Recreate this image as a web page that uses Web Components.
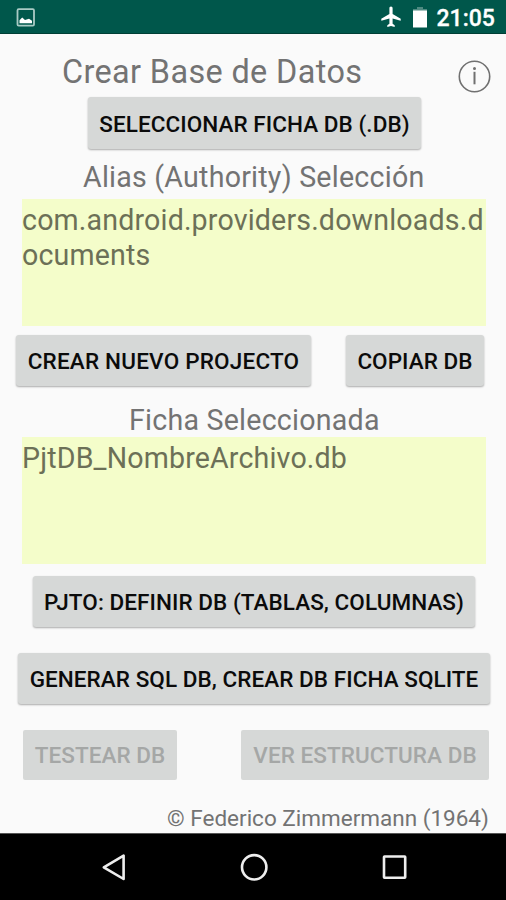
<!DOCTYPE html>
<html lang="es">
<head>
<meta charset="utf-8">
<title>Crear Base de Datos</title>
<style>
html,body{margin:0;height:100%}
body{font-family:Roboto,"Liberation Sans",sans-serif;background:#fafafa;overflow:hidden}
</style>
</head>
<body>
<db-app></db-app>
<script>
const define = (name, html) => customElements.define(name, class extends HTMLElement {
  constructor() {
    super();
    this.attachShadow({ mode: 'open' }).innerHTML = html;
  }
});

define('status-bar', `
<style>
:host{display:flex;align-items:center;height:34px;box-sizing:border-box;padding:2px 11px 0 16px;background:linear-gradient(#00574b 0 33px,#003f35 33px);color:#fff;flex:none}
svg{display:block;flex:none}
.gap{flex:1}
.plane{margin:0 12px 2px 0}
.battery{margin:0 9px 2px 0}
span{font-size:23px;line-height:30px;height:28px;font-weight:500;letter-spacing:.05px;-webkit-text-stroke:.3px #fff}
</style>
<svg width="20" height="20" viewBox="0 0 20 20"><rect x="1.5" y="1.2" width="16.5" height="16.5" rx="1.2" fill="none" stroke="#a9cbc5" stroke-width="1.8"/><path d="M3.500 15.300V12.300L6.200 9.600L9 11.900L13 10.700L16 12.800V15.300Z" fill="#fff"/></svg>
<div class="gap"></div>
<svg class="plane" width="20" height="22" viewBox="0 0 20 22"><path d="M10 0.5C9 .5 8.4 1.3 8.4 2.3V8L0.3 12.7V14.8L8.4 12.4V17.7L6.3 19.3V20.9L10 19.9L13.7 20.9V19.3L11.6 17.7V12.4L19.7 14.8V12.7L11.6 8V2.3C11.6 1.3 11 .5 10 .5Z" fill="#fff"/></svg>
<svg class="battery" width="14" height="21" viewBox="0 0 14 21"><path d="M4 0H10V2H14V4H0V2H4Z" fill="#4f8a81"/><path d="M0 3.5H14V20.500H0Z" fill="#fff"/></svg>
<span>21:05</span>`);

define('text-label', `
<style>
:host{display:block;color:#737373;white-space:nowrap;font-size:28.6px;line-height:34px;letter-spacing:.23px}
</style><slot></slot>`);

define('info-icon', `
<style>:host{display:block;width:34px;height:34px}svg{display:block}</style>
<svg width="34" height="34" viewBox="0 0 34 34"><circle cx="16.500" cy="17.500" r="15.200" fill="none" stroke="#707070" stroke-width="1.6"/><path d="M16.500 12.800V25.300" stroke="#707070" stroke-width="2"/><circle cx="16.500" cy="9.400" r="1.500" fill="#707070"/></svg>`);

define('raised-button', `
<style>
:host{display:flex;box-sizing:border-box;flex:none}
button{all:unset;flex:1;box-sizing:border-box;height:var(--height,51px);border-radius:3px;background:#d6d8d7;color:#0b0b0b;text-align:center;white-space:nowrap;font-size:22.5px;font-weight:500;line-height:var(--line,52px);letter-spacing:var(--track,.06px);box-shadow:0 1px 2px rgba(0,0,0,.32)}
:host([disabled]) button{height:50px;line-height:51px;color:#a5a7a6;box-shadow:none;border-radius:2px}
</style>
<button><slot></slot></button>`);

define('value-field', `
<style>
:host{display:block;box-sizing:border-box;width:464px;height:127px;background:#f4fdca;color:#6c7057;font-size:28.6px;line-height:35px;padding-top:4px;word-break:break-all;letter-spacing:.16px}
</style><slot></slot>`);

define('nav-bar', `
<style>
:host{display:block;height:67px;background:#000;border-top:1px solid #555;box-sizing:border-box;flex:none}
svg{display:block}
</style>
<svg width="506" height="66" viewBox="0 0 506 66" fill="none" stroke="#eee" stroke-width="2.6" stroke-linejoin="round"><path d="M103.800 33.300L123.600 21.600V45Z"/><circle cx="254.200" cy="33.300" r="12.200"/><rect x="384" y="22.500" width="21.200" height="21.200" rx=".5"/></svg>`);

define('db-app', `
<style>
:host{display:flex;flex-direction:column;width:506px;height:900px;background:#fafafa}
main{flex:1;display:flex;flex-direction:column;box-sizing:border-box;min-height:0}
.row{display:flex;flex:none}
.title{height:63px;align-items:flex-start;padding:19px 14px 0 62px;box-sizing:border-box;justify-content:space-between}
.title text-label{font-size:32.4px;line-height:38px;letter-spacing:.38px}
.title info-icon{margin-top:6px}
</style>
<status-bar></status-bar>
<main>
  <div class="row title"><text-label>Crear Base de Datos</text-label><info-icon></info-icon></div>
  <raised-button style="margin:0 85px 0 88px;--height:52px;--line:54px">SELECCIONAR FICHA DB (.DB)</raised-button>
  <text-label style="margin:11px 0 0 83px;height:39px">Alias (Authority) Selección</text-label>
  <value-field style="margin-left:22px">com.android.providers.downloads.documents</value-field>
  <div class="row" style="margin:9px 22px 0 16px;justify-content:space-between">
    <raised-button style="width:295px;--track:.2px">CREAR NUEVO PROJECTO</raised-button>
    <raised-button style="width:138px">COPIAR DB</raised-button>
  </div>
  <text-label style="margin:17px 0 0 129px;height:34px">Ficha Seleccionada</text-label>
  <value-field style="margin-left:22px">PjtDB_NombreArchivo.db</value-field>
  <raised-button style="margin:12px 31px 0 33px">PJTO: DEFINIR DB (TABLAS, COLUMNAS)</raised-button>
  <raised-button style="margin:26px 16px 0 18px">GENERAR SQL DB, CREAR DB FICHA SQLITE</raised-button>
  <div class="row" style="margin:26px 17px 0 23px;justify-content:space-between">
    <raised-button disabled style="width:154px">TESTEAR DB</raised-button>
    <raised-button disabled style="width:248px">VER ESTRUCTURA DB</raised-button>
  </div>
  <text-label style="margin:24px 0 0 167px;font-size:22.5px;line-height:28px;letter-spacing:0">© Federico Zimmermann (1964)</text-label>
</main>
<nav-bar></nav-bar>`);
</script>
</body>
</html>
